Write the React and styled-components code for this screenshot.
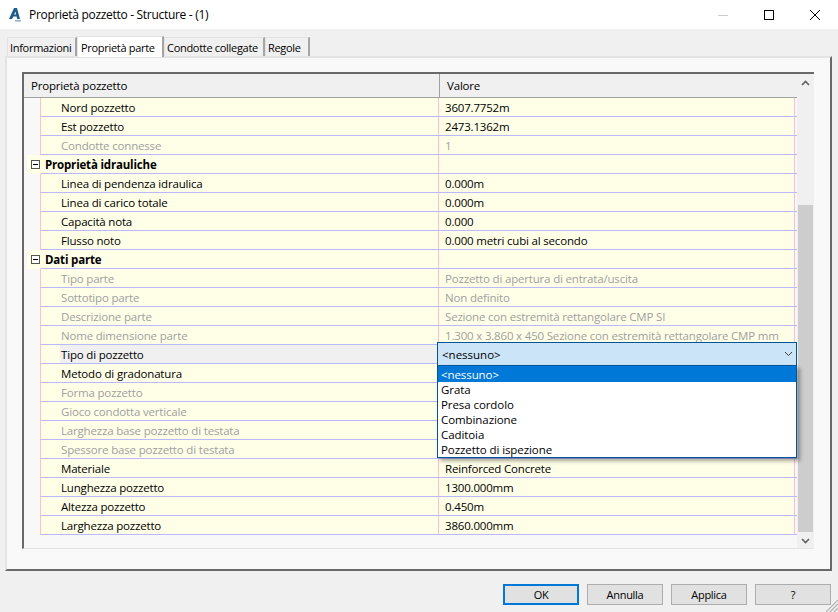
import styled, { createGlobalStyle } from 'styled-components'

const GlobalStyle = createGlobalStyle`
  html, body {
    margin: 0;
    padding: 0;
    background: #f0f0f0;
  }
  * {
    box-sizing: border-box;
  }
`

const Dialog = styled.div`
  position: relative;
  width: 838px;
  height: 612px;
  display: flex;
  flex-direction: column;
  overflow: hidden;
  background: #f0f0f0;
  color: #000;
  font-family: 'Open Sans', 'Noto Sans', sans-serif;
  font-size: 11.5px;
  letter-spacing: -0.18px;
`

const TitleBar = styled.div`
  height: 29px;
  flex: none;
  display: flex;
  align-items: center;
  background: #fff;
  padding-left: 9px;
`

const TitleText = styled.div`
  margin-left: 8px;
  font-size: 12px;
  flex: 1;
  letter-spacing: -0.3px;
`

const WinControls = styled.div`
  display: flex;
  align-items: center;
  gap: 36px;
  padding-right: 18px;
`

const TabStrip = styled.div`
  height: 27px;
  flex: none;
  display: flex;
  align-items: flex-end;
  padding-left: 7px;
  font-size: 11px;
  letter-spacing: -0.3px;
`

const Tab = styled.div`
  height: ${p => (p.$active ? '21px' : '19px')};
  width: ${p => p.$w}px;
  padding-left: ${p => p.$pl}px;
  display: flex;
  align-items: center;
  white-space: nowrap;
  background: ${p => (p.$active ? '#fff' : '#f0f0f0')};
  border-top: 1px solid #e3e3e3;
  border-left: 1px solid #e3e3e3;
  border-right: 2px solid #a5a5a5;
  position: relative;
  z-index: ${p => (p.$active ? 2 : 0)};
  margin-bottom: ${p => (p.$active ? '-1px' : 0)};
`

const Panel = styled.div`
  width: 827px;
  height: 515px;
  flex: none;
  margin-left: 5px;
  padding: 14px 15px 0 15px;
  background: #f9f9f9;
  border-top: 2px solid #e3e3e3;
  border-left: 2px solid #e3e3e3;
  border-right: 2px solid #696969;
  border-bottom: 2px solid #696969;
`

const Grid = styled.div`
  width: 792px;
  height: 477px;
  display: flex;
  background: #f8f8f8;
  border-top: 2px solid #696969;
  border-left: 2px solid #696969;
  border-bottom: 1px solid #e3e3e3;
`

const Table = styled.div`
  flex: 1;
  min-width: 0;
`

const Header = styled.div`
  height: 24px;
  display: flex;
  background: #f0f0f0;
  border-bottom: 1px solid #a0a0a0;
`

const HeaderCell = styled.div`
  width: ${p => p.$w}px;
  flex: ${p => (p.$w ? 'none' : 1)};
  display: flex;
  align-items: center;
  padding-left: ${p => p.$pl}px;
  ${p => (p.$w ? 'border-right: 1px solid #a0a0a0;' : '')}
`

const Row = styled.div`
  height: 19px;
  display: flex;
`

const Gutter = styled.div`
  width: ${p => (p.$group ? '13px' : '16px')};
  margin-left: ${p => (p.$group ? '3px' : 0)};
  flex: none;
  display: flex;
  align-items: center;
  justify-content: flex-start;
  padding-left: 4px;
  background: ${p => (p.$group ? '#ffffe8' : 'transparent')};
`

const RowBody = styled.div`
  flex: 1;
  display: flex;
  padding-right: 2px;
  border-left: 1px solid ${p => (p.$group ? '#ffffe8' : '#ffc0cb')};
  border-bottom: 1px solid #b9b9ff;
`

const NameCell = styled.div`
  width: 398px;
  flex: none;
  padding-left: ${p => (p.$group ? '4px' : '20px')};
  display: flex;
  align-items: center;
  white-space: nowrap;
  font-weight: ${p => (p.$group ? 700 : 400)};
  color: ${p => (p.$off ? '#a0a0a0' : '#000')};
  background: ${p =>
    p.$selected
      ? 'linear-gradient(to right, #ffffe8 19px, #f0f0f0 19px)'
      : '#ffffe8'};
  border-right: 1px solid #ffc0cb;
`

const ValueCell = styled.div`
  flex: 1;
  position: relative;
  padding-left: 6px;
  display: flex;
  align-items: center;
  white-space: nowrap;
  color: ${p => (p.$off ? '#a0a0a0' : '#000')};
  background: #ffffe8;
  border-right: 1px solid #ffc0cb;
`

const Dropdown = styled.div`
  position: absolute;
  left: -2px;
  top: -3px;
  width: 360px;
  z-index: 5;
`

const Combo = styled.div`
  height: 24px;
  display: flex;
  align-items: center;
  justify-content: space-between;
  padding: 0 3px 0 4px;
  letter-spacing: 0;
  background: #cce4f7;
  border: 1px solid #005499;
`

const List = styled.div`
  margin-top: -1px;
  height: 93px;
  letter-spacing: -0.08px;
  background: #fff;
  border: 1px solid #005499;
  box-shadow: 3px 3px 4px rgba(0, 0, 0, 0.35);
`

const ListItem = styled.div`
  height: ${p => (p.$active ? '16px' : '15px')};
  padding-left: 3px;
  display: flex;
  align-items: center;
  color: ${p => (p.$active ? '#fff' : '#000')};
  background: ${p => (p.$active ? '#0078d7' : '#fff')};
`

const Scrollbar = styled.div`
  width: 17px;
  flex: none;
  display: flex;
  flex-direction: column;
  background: #f0f0f0;
`

const ScrollArrow = styled.div`
  height: 17px;
  flex: none;
  display: flex;
  align-items: center;
  justify-content: center;
`

const ScrollThumb = styled.div`
  height: 327px;
  flex: none;
  margin: 114px 1px 0;
  background: #cdcdcd;
`

const Footer = styled.div`
  flex: none;
  display: flex;
  justify-content: flex-end;
  gap: 8px;
  padding: 13px 7px 0 0;
  font-size: 11px;
  letter-spacing: -0.3px;
`

const Button = styled.div`
  width: 76px;
  height: 21px;
  display: flex;
  align-items: center;
  justify-content: center;
  background: #e1e1e1;
  border: ${p => (p.$primary ? '2px solid #0078d7' : '1px solid #adadad')};
`

const Grip = styled.svg`
  position: absolute;
  right: 0;
  bottom: 0;
`

const ExpandBox = () => (
  <svg width="9" height="9" viewBox="0 0 9 9">
    <rect x="0.5" y="0.5" width="8" height="8" fill="#fff" stroke="#555" />
    <path d="M2 4.5h5" stroke="#000" />
  </svg>
)

const Chevron = ({ up, color = '#606060', width = 1.6 }) => (
  <svg width="9" height="6" viewBox="0 0 9 6">
    <path
      d={up ? 'M1 5l3.5-3.5L8 5' : 'M1 1l3.5 3.5L8 1'}
      fill="none"
      stroke={color}
      strokeWidth={width}
    />
  </svg>
)

const AppIcon = () => (
  <svg width="12" height="15" viewBox="0 0 12 15">
    <path d="M0 12L5 1h3l3 11H8.2l-.6-2.6H4.4L3 12z" fill="#1b5f8c" />
    <path d="M5.2 7.4h1.9l-.6-2.8z" fill="#fff" />
    <path d="M6 13h6v1.6H6z" fill="#8fb5cf" />
  </svg>
)

const rows = [
  { name: 'Nord pozzetto', value: '3607.7752m' },
  { name: 'Est pozzetto', value: '2473.1362m' },
  { name: 'Condotte connesse', value: '1', off: true },
  { name: 'Proprietà idrauliche', group: true },
  { name: 'Linea di pendenza idraulica', value: '0.000m' },
  { name: 'Linea di carico totale', value: '0.000m' },
  { name: 'Capacità nota', value: '0.000' },
  { name: 'Flusso noto', value: '0.000 metri cubi al secondo' },
  { name: 'Dati parte', group: true },
  { name: 'Tipo parte', value: 'Pozzetto di apertura di entrata/uscita', off: true },
  { name: 'Sottotipo parte', value: 'Non definito', off: true },
  { name: 'Descrizione parte', value: 'Sezione con estremità rettangolare CMP SI', off: true },
  { name: 'Nome dimensione parte', value: '1.300 x 3.860 x 450 Sezione con estremità rettangolare CMP mm', off: true },
  { name: 'Tipo di pozzetto', selected: true, dropdown: true },
  { name: 'Metodo di gradonatura' },
  { name: 'Forma pozzetto', off: true },
  { name: 'Gioco condotta verticale', off: true },
  { name: 'Larghezza base pozzetto di testata', off: true },
  { name: 'Spessore base pozzetto di testata', off: true },
  { name: 'Materiale', value: 'Reinforced Concrete' },
  { name: 'Lunghezza pozzetto', value: '1300.000mm' },
  { name: 'Altezza pozzetto', value: '0.450m' },
  { name: 'Larghezza pozzetto', value: '3860.000mm' },
]

const options = ['Grata', 'Presa cordolo', 'Combinazione', 'Caditoia', 'Pozzetto di ispezione']

export default function App() {
  return (
    <Dialog>
      <GlobalStyle />
      <TitleBar>
        <AppIcon />
        <TitleText>Proprietà pozzetto - Structure - (1)</TitleText>
        <WinControls>
          <svg width="10" height="10" viewBox="0 0 10 10">
            <path d="M0 5.5h10" stroke="#ccc" />
          </svg>
          <svg width="10" height="10" viewBox="0 0 10 10">
            <rect x="0.5" y="0.5" width="9" height="9" fill="none" stroke="#000" />
          </svg>
          <svg width="10" height="10" viewBox="0 0 10 10">
            <path d="M0 0l10 10M10 0L0 10" stroke="#000" />
          </svg>
        </WinControls>
      </TitleBar>
      <TabStrip>
        <Tab $w={70} $pl={2}>Informazioni</Tab>
        <Tab $active $w={87} $pl={3}>Proprietà parte</Tab>
        <Tab $w={101} $pl={2}>Condotte collegate</Tab>
        <Tab $w={45} $pl={2}>Regole</Tab>
      </TabStrip>
      <Panel>
        <Grid>
          <Table>
            <Header>
              <HeaderCell $w={416} $pl={7}>Proprietà pozzetto</HeaderCell>
              <HeaderCell $pl={7}>Valore</HeaderCell>
            </Header>
            {rows.map(row => (
              <Row key={row.name}>
                <Gutter $group={row.group}>{row.group && <ExpandBox />}</Gutter>
                <RowBody $group={row.group}>
                  <NameCell $group={row.group} $off={row.off} $selected={row.selected}>
                    {row.name}
                  </NameCell>
                  <ValueCell $off={row.off}>
                    {row.value}
                    {row.dropdown && (
                      <Dropdown>
                        <Combo>
                          &lt;nessuno&gt;
                          <Chevron color="#404040" width={1} />
                        </Combo>
                        <List>
                          <ListItem $active>&lt;nessuno&gt;</ListItem>
                          {options.map(option => (
                            <ListItem key={option}>{option}</ListItem>
                          ))}
                        </List>
                      </Dropdown>
                    )}
                  </ValueCell>
                </RowBody>
              </Row>
            ))}
          </Table>
          <Scrollbar>
            <ScrollArrow><Chevron up /></ScrollArrow>
            <ScrollThumb />
            <ScrollArrow><Chevron /></ScrollArrow>
          </Scrollbar>
        </Grid>
      </Panel>
      <Footer>
        <Button $primary>OK</Button>
        <Button>Annulla</Button>
        <Button>Applica</Button>
        <Button>?</Button>
      </Footer>
      <Grip width="12" height="12" viewBox="0 0 12 12">
        <path d="M0 12L12 0M4 12l8-8M8 12l4-4" stroke="#b0b0b0" strokeWidth="1.2" />
      </Grip>
    </Dialog>
  )
}
